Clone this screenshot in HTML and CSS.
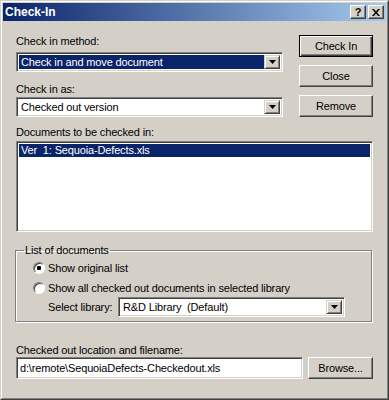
FILE: index.html
```html
<!DOCTYPE html>
<html lang="en">

<head>
  <meta charset="UTF-8">
  <title>Check-In</title>
  <link rel="stylesheet" href="styles.css">
</head>

<body>
  <div class="window">
    <div class="window__frame">

      <!-- TITLE BAR -->
      <div class="titlebar">
        <span class="titlebar__text">Check-In</span>
        <div class="titlebar__buttons">
          <span class="cap-btn cap-btn--help">?</span>
          <span class="cap-btn">
            <svg class="cap-btn__x" viewBox="0 0 8 7">
              <path d="M0 0h2l2 2.5L6 0h2L5 3.5 8 7H6L4 4.5 2 7H0l3-3.5z"></path>
            </svg>
          </span>
        </div>
      </div>

      <div class="dialog">
        <!-- METHOD / VERSION + BUTTONS -->
        <div class="top">
          <div class="fields">
            <div class="lbl">Check in method:</div>
            <div class="combo combo--method combo--focus">
              <span class="combo__text">Check in and move document</span>
              <span class="combo__btn">
                <svg class="arrow" viewBox="0 0 7 4"><path d="M0 0h7L3.5 4z"></path></svg>
              </span>
            </div>
            <div class="lbl lbl--as">Check in as:</div>
            <div class="combo combo--as">
              <span class="combo__text">Checked out version</span>
              <span class="combo__btn">
                <svg class="arrow" viewBox="0 0 7 4"><path d="M0 0h7L3.5 4z"></path></svg>
              </span>
            </div>
          </div>

          <div class="actions">
            <button class="btn btn--default">Check In</button>
            <button class="btn">Close</button>
            <button class="btn">Remove</button>
          </div>
        </div>

        <!-- DOCUMENT LIST -->
        <div class="lbl lbl--docs">Documents to be checked in:</div>
        <div class="listbox">
          <div class="listbox__item listbox__item--selected">Ver&nbsp; 1: Sequoia-Defects.xls</div>
        </div>

        <!-- LIST OPTIONS -->
        <fieldset class="group">
          <legend class="group__legend">List of documents</legend>
          <div class="radio-row">
            <span class="radio radio--checked"></span>
            <span>Show original list</span>
          </div>
          <div class="radio-row radio-row--second">
            <span class="radio"></span>
            <span>Show all checked out documents in selected library</span>
          </div>
          <div class="library-row">
            <span class="library-row__label">Select library:</span>
            <div class="combo combo--library">
              <span class="combo__text">R&amp;D Library&nbsp; (Default)</span>
              <span class="combo__btn">
                <svg class="arrow" viewBox="0 0 7 4"><path d="M0 0h7L3.5 4z"></path></svg>
              </span>
            </div>
          </div>
        </fieldset>

        <!-- LOCATION -->
        <div class="lbl lbl--location">Checked out location and filename:</div>
        <div class="path-row">
          <div class="textbox">d:\remote\SequoiaDefects-Checkedout.xls</div>
          <button class="btn btn--browse">Browse...</button>
        </div>
      </div>

    </div>
  </div>
</body>

</html>
```

FILE: styles.css
```css
:root {
  --face: #d4d0c8;
  --shadow: #808080;
  --darkShadow: #404040;
  --highlight: #fff;
  --selection: #0a246a;
  --titleEnd: #a6caf0;
  --uiFont: "Liberation Sans", Arial, sans-serif;
}

* {
  box-sizing: border-box;
}

html,
body {
  margin: 0;
  padding: 0;
}

body {
  width: 389px;
  height: 400px;
  background: var(--face);
  font-family: var(--uiFont);
  font-size: 11px;
  letter-spacing: -0.15px;
  line-height: 14px;
  color: #000;
}

.window {
  width: 389px;
  height: 400px;
  border: 1px solid;
  border-color: var(--face) var(--darkShadow) var(--darkShadow) var(--face);
}

.window__frame {
  height: 100%;
  border: 1px solid;
  border-color: var(--highlight) var(--shadow) var(--shadow) var(--highlight);
  padding: 1px;
  display: flex;
  flex-direction: column;
}

/* title bar */

.titlebar {
  height: 18px;
  display: flex;
  align-items: center;
  justify-content: space-between;
  padding: 0 2px 0 2px;
  background: linear-gradient(to right, var(--selection), var(--titleEnd));
  letter-spacing: 0;
}

.titlebar__text {
  color: #fff;
  font-weight: 700;
  font-size: 12px;
}

.titlebar__buttons {
  display: flex;
  gap: 2px;
}

.cap-btn {
  width: 16px;
  height: 14px;
  display: flex;
  align-items: center;
  justify-content: center;
  background: var(--face);
  border: 1px solid;
  border-color: var(--highlight) var(--darkShadow) var(--darkShadow) var(--highlight);
  box-shadow: inset -1px -1px 0 var(--shadow);
  font-weight: 700;
  font-size: 11px;
  line-height: 1;
}

.cap-btn__x {
  width: 8px;
  height: 7px;
  fill: #000;
}

/* dialog body */

.dialog {
  flex: 1;
  padding: 13px 13px 0 13px;
}

.lbl {
  height: 14px;
  white-space: nowrap;
}

.top {
  display: flex;
  justify-content: space-between;
}

.fields {
  width: 267px;
}

.lbl--as {
  margin-top: 10px;
}

.combo {
  height: 20px;
  display: flex;
  align-items: stretch;
  background: #fff;
  border: 1px solid;
  border-color: var(--shadow) var(--highlight) var(--highlight) var(--shadow);
  box-shadow: inset 1px 1px 0 var(--darkShadow), inset -1px -1px 0 var(--face);
  padding: 2px 2px 2px 2px;
}

.combo--method {
  margin-top: 4px;
}

.combo--as {
  margin-top: 1px;
}

.combo__text {
  flex: 1;
  padding-left: 2px;
  line-height: 15px;
  white-space: nowrap;
  overflow: hidden;
}

.combo--focus .combo__text {
  background: var(--selection);
  color: #fff;
}

.combo__btn {
  width: 16px;
  display: flex;
  align-items: center;
  justify-content: center;
  background: var(--face);
  border: 1px solid;
  border-color: var(--face) var(--darkShadow) var(--darkShadow) var(--face);
  box-shadow: inset 1px 1px 0 var(--highlight), inset -1px -1px 0 var(--shadow);
}

.arrow {
  width: 7px;
  height: 4px;
  fill: #000;
}

.actions {
  width: 74px;
  padding-top: 1px;
  display: flex;
  flex-direction: column;
  gap: 8px;
}

.btn {
  height: 22px;
  margin: 0;
  padding: 0;
  font: inherit;
  letter-spacing: inherit;
  color: #000;
  background: var(--face);
  border: 1px solid;
  border-color: var(--highlight) var(--darkShadow) var(--darkShadow) var(--highlight);
  box-shadow: inset -1px -1px 0 var(--shadow);
}

.btn--default {
  border-color: #000;
  box-shadow: inset 1px 1px 0 var(--highlight), inset -1px -1px 0 var(--darkShadow), inset -2px -2px 0 var(--shadow);
}

/* documents list */

.lbl--docs {
  margin-top: 8px;
}

.listbox {
  height: 91px;
  margin-top: 2px;
  background: #fff;
  border: 1px solid;
  border-color: var(--shadow) var(--highlight) var(--highlight) var(--shadow);
  box-shadow: inset 1px 1px 0 var(--darkShadow), inset -1px -1px 0 var(--face);
  padding: 2px 2px;
}

.listbox__item {
  height: 13px;
  line-height: 13px;
  padding-left: 2px;
}

.listbox__item--selected {
  background: var(--selection);
  color: #fff;
}

/* group box */

.group {
  margin: 11px 1px 0 -1px;
  padding: 3px 6px 4px 17px;
  border: 1px solid var(--shadow);
  box-shadow: 1px 1px 0 var(--highlight), inset 1px 1px 0 var(--highlight);
}

.group__legend {
  margin-left: -9px;
  padding: 0 1px;
  line-height: 14px;
}

.radio-row {
  height: 16px;
  display: flex;
  align-items: center;
  gap: 3px;
}

.radio-row--second {
  margin-top: 4px;
}

.radio {
  width: 12px;
  height: 12px;
  border-radius: 50%;
  border: 1px solid;
  border-color: var(--shadow) var(--highlight) var(--highlight) var(--shadow);
  background: #fff;
  box-shadow: inset 1px 1px 0 var(--darkShadow);
}

.radio--checked {
  background: radial-gradient(circle at 50% 50%, #000 2px, #fff 2.5px);
}

.library-row {
  margin-top: 1px;
  padding-left: 15px;
  display: flex;
  align-items: center;
  gap: 6px;
}

.library-row__label {
  width: 64px;
  white-space: nowrap;
}

.combo--library {
  width: 227px;
}

/* location */

.lbl--location {
  margin-top: 21px;
}

.path-row {
  margin-top: 0;
  display: flex;
  gap: 5px;
}

.textbox {
  width: 287px;
  height: 22px;
  padding: 3px 3px;
  background: #fff;
  border: 1px solid;
  border-color: var(--shadow) var(--highlight) var(--highlight) var(--shadow);
  box-shadow: inset 1px 1px 0 var(--darkShadow), inset -1px -1px 0 var(--face);
  white-space: nowrap;
  overflow: hidden;
}

.btn--browse {
  width: 65px;
}
```
